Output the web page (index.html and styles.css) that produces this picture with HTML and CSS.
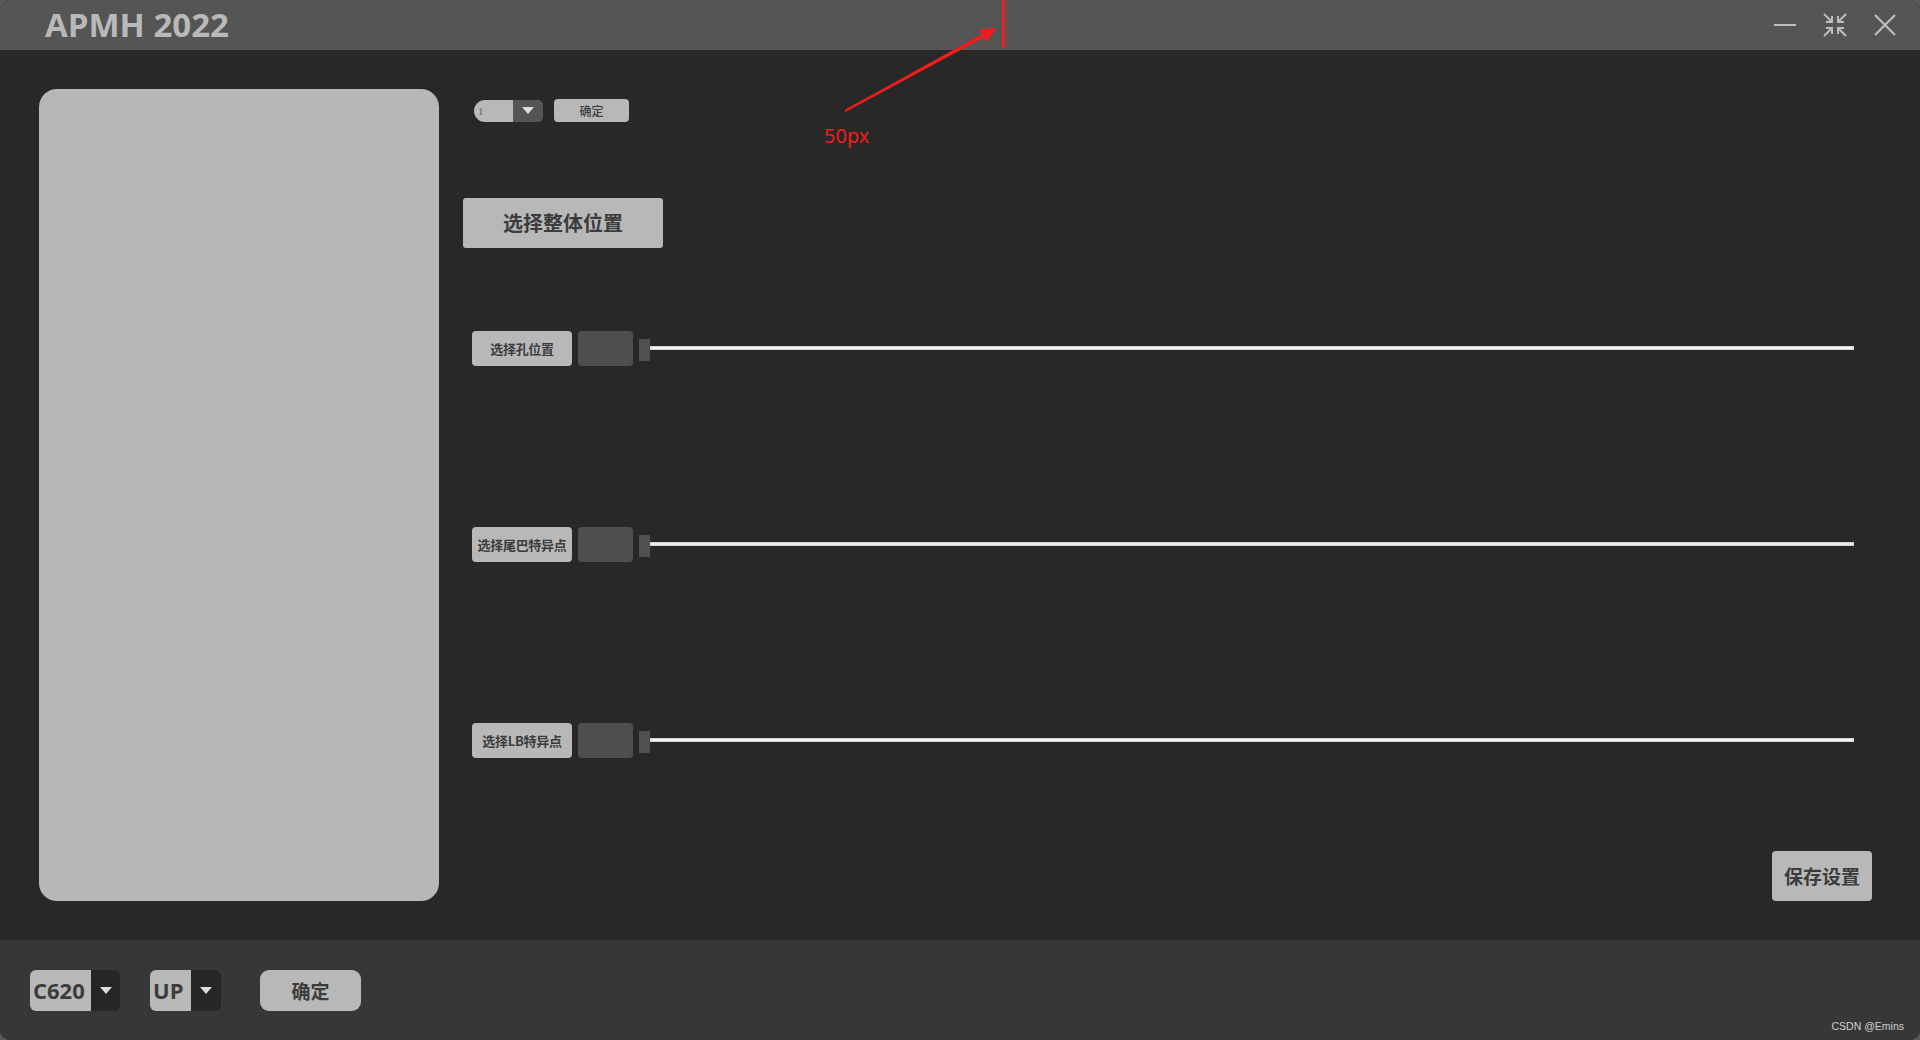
FILE: index.html
```html
<!DOCTYPE html>
<html lang="zh-CN">
<head>
<meta charset="utf-8">
<title>APMH 2022</title>
<link rel="stylesheet" href="styles.css">
</head>
<body>
<div class="app">
  <header class="titlebar">
    <div class="title">APMH 2022</div>
    <div class="win-controls">
      <svg class="win-btn" width="30" height="30" viewBox="0 0 30 30"><line x1="4" y1="15" x2="26" y2="15" stroke="#bdbdbd" stroke-width="2"/></svg>
      <svg class="win-btn" width="30" height="30" viewBox="0 0 30 30" fill="none" stroke="#bdbdbd" stroke-width="2">
        <path d="M4 4 L12 12 M12 6 V12 H6"/>
        <path d="M26 4 L18 12 M18 6 V12 H24"/>
        <path d="M4 26 L12 18 M12 24 V18 H6"/>
        <path d="M26 26 L18 18 M18 24 V18 H24"/>
      </svg>
      <svg class="win-btn" width="30" height="30" viewBox="0 0 30 30"><path d="M5 5 L25 25 M25 5 L5 25" stroke="#bdbdbd" stroke-width="2.2" fill="none"/></svg>
    </div>
  </header>

  <main class="main">
    <section class="preview"></section>
    <section class="controls">
      <div class="top-row">
        <div class="mini-combo">
          <span class="mini-value">1</span>
          <span class="mini-arrow"><i class="tri"></i></span>
        </div>
        <button class="btn btn-mini">确定</button>
      </div>

      <button class="btn btn-large">选择整体位置</button>

      <div class="slider-row row-first">
        <button class="btn btn-row">选择孔位置</button>
        <div class="value-box"></div>
        <div class="slider"><span class="handle"></span><span class="track"></span></div>
      </div>

      <div class="slider-row">
        <button class="btn btn-row">选择尾巴特异点</button>
        <div class="value-box"></div>
        <div class="slider"><span class="handle"></span><span class="track"></span></div>
      </div>

      <div class="slider-row">
        <button class="btn btn-row">选择LB特异点</button>
        <div class="value-box"></div>
        <div class="slider"><span class="handle"></span><span class="track"></span></div>
      </div>

      <button class="btn btn-save">保存设置</button>
    </section>
  </main>

  <footer class="bottombar">
    <div class="combo combo-model">
      <span class="combo-value">C620</span>
      <span class="combo-arrow"><i class="tri"></i></span>
    </div>
    <div class="combo combo-dir">
      <span class="combo-value">UP</span>
      <span class="combo-arrow"><i class="tri"></i></span>
    </div>
    <button class="btn btn-confirm">确定</button>
  </footer>
</div>

<svg class="annotation" width="1920" height="1040" viewBox="0 0 1920 1040">
  <polygon fill="#f01d1d" points="844.5,110.1 982.0,33.9 979.6,29.5 997,28 986.3,41.8 983.9,37.4 845.5,111.9"/>
  <rect x="1002" y="0" width="3" height="48" fill="#f01d1d"/>
</svg>
<div class="annotation-label">50px</div>
<div class="watermark">CSDN @Emins</div>
</body>
</html>
```

FILE: styles.css
```css
html, body {
  margin: 0;
  padding: 0;
  background: #5a5a5a;
}

body {
  width: 1920px;
  height: 1040px;
  overflow: hidden;
  position: relative;
  font-family: "Noto Sans CJK SC", "Noto Sans", sans-serif;
}

.app {
  width: 1920px;
  height: 1040px;
  display: flex;
  flex-direction: column;
  background: #282828;
  border-radius: 10px;
  overflow: hidden;
}

/* title bar */
.titlebar {
  height: 50px;
  flex: 0 0 50px;
  background: #555555;
  display: flex;
  align-items: center;
  justify-content: space-between;
  padding: 0 20px 0 45px;
  box-sizing: border-box;
}

.title {
  font-family: "Open Sans", "Noto Sans", sans-serif;
  font-weight: 700;
  font-size: 33px;
  color: #b9b9b9;
  line-height: 50px;
  margin-top: -1px;
}

.win-controls {
  display: flex;
  align-items: center;
  gap: 20px;
  margin-top: -1px;
}

.win-btn {
  display: block;
}

/* main area */
.main {
  flex: 1;
  display: flex;
  padding: 39px 0 0 39px;
  box-sizing: border-box;
}

.preview {
  width: 400px;
  height: 812px;
  background: #b7b7b7;
  border-radius: 18px;
  flex: 0 0 400px;
}

.controls {
  flex: 1;
  display: flex;
  flex-direction: column;
  align-items: flex-start;
  margin-left: 24px;
  padding-right: 48px;
}

.btn {
  background: #b8b8b8;
  border: none;
  color: #3c3c3c;
  font-family: "Noto Sans CJK SC", "Noto Sans", sans-serif;
  font-weight: 700;
  padding: 0;
  cursor: pointer;
}

/* top row */
.top-row {
  display: flex;
  align-items: center;
  gap: 11px;
  margin: 10px 0 0 11px;
  height: 23px;
}

.mini-combo {
  display: flex;
  width: 69px;
  height: 22px;
}

.mini-value {
  width: 39px;
  background: #b8b8b8;
  border-radius: 11px 0 0 11px;
  font-family: "Liberation Serif", serif;
  font-size: 11px;
  color: #666666;
  line-height: 22px;
  padding-left: 4px;
  box-sizing: border-box;
}

.mini-arrow {
  width: 30px;
  background: #555555;
  border-radius: 0 5px 5px 0;
  display: flex;
  align-items: center;
  justify-content: center;
}

.btn-mini {
  width: 75px;
  height: 23px;
  border-radius: 4px;
  font-size: 12px;
  font-weight: 500;
  line-height: 23px;
}

.tri {
  display: block;
  width: 0;
  height: 0;
  border-left: 6px solid transparent;
  border-right: 6px solid transparent;
  border-top: 7px solid #dcdcdc;
}

.btn-large {
  width: 200px;
  height: 50px;
  margin-top: 76px;
  border-radius: 3px;
  font-size: 20px;
  line-height: 50px;
}

/* slider rows */
.slider-row {
  display: flex;
  align-items: center;
  gap: 6px;
  margin: 161px 0 0 9px;
  align-self: stretch;
  padding-right: 18px;
}

.slider-row.row-first {
  margin-top: 83px;
}

.btn-row {
  width: 100px;
  height: 35px;
  border-radius: 4px;
  font-size: 13px;
  line-height: 35px;
  white-space: nowrap;
  letter-spacing: -0.3px;
}

.value-box {
  width: 55px;
  height: 35px;
  background: #4f4f4f;
  border-radius: 4px;
}

.slider {
  flex: 1;
  display: flex;
  align-items: center;
  height: 35px;
}

.handle {
  width: 11px;
  height: 22px;
  background: #505050;
  margin-top: 2px;
}

.track {
  flex: 1;
  height: 4px;
  background: #f0f0f0;
  box-shadow: inset 0 0 0 1px #d4d4d4;
  margin-top: -2px;
}

.btn-save {
  align-self: flex-end;
  width: 100px;
  height: 50px;
  margin-top: 93px;
  border-radius: 4px;
  font-size: 19px;
  line-height: 50px;
}

/* bottom bar */
.bottombar {
  height: 100px;
  flex: 0 0 100px;
  background: #373737;
  display: flex;
  align-items: flex-start;
  padding: 30px 0 0 30px;
  box-sizing: border-box;
}

.combo {
  display: flex;
  height: 41px;
  border-radius: 6px;
  overflow: hidden;
}

.combo-value {
  background: #b8b8b8;
  color: #3c3c3c;
  font-family: "Open Sans", "Noto Sans", sans-serif;
  font-weight: 700;
  font-size: 22px;
  line-height: 41px;
  padding-left: 3px;
  box-sizing: border-box;
}

.combo-arrow {
  background: #262626;
  display: flex;
  align-items: center;
  justify-content: center;
}

.combo-model .combo-value { width: 61px; }
.combo-model .combo-arrow { width: 29px; }

.combo-dir {
  margin-left: 30px;
}
.combo-dir .combo-value { width: 41px; }
.combo-dir .combo-arrow { width: 30px; }

.btn-confirm {
  width: 101px;
  height: 41px;
  margin-left: 39px;
  border-radius: 9px;
  font-size: 19px;
  line-height: 41px;
}

/* overlays */
.annotation {
  position: absolute;
  left: 0;
  top: 0;
  pointer-events: none;
}

.annotation-label {
  position: absolute;
  left: 824px;
  top: 124px;
  font-family: "Noto Sans", sans-serif;
  font-size: 20px;
  line-height: 24px;
  color: #f01d1d;
}

.watermark {
  position: absolute;
  right: 16px;
  bottom: 8px;
  font-family: "Liberation Sans", sans-serif;
  font-size: 10.5px;
  color: #cfcfcf;
}
```
